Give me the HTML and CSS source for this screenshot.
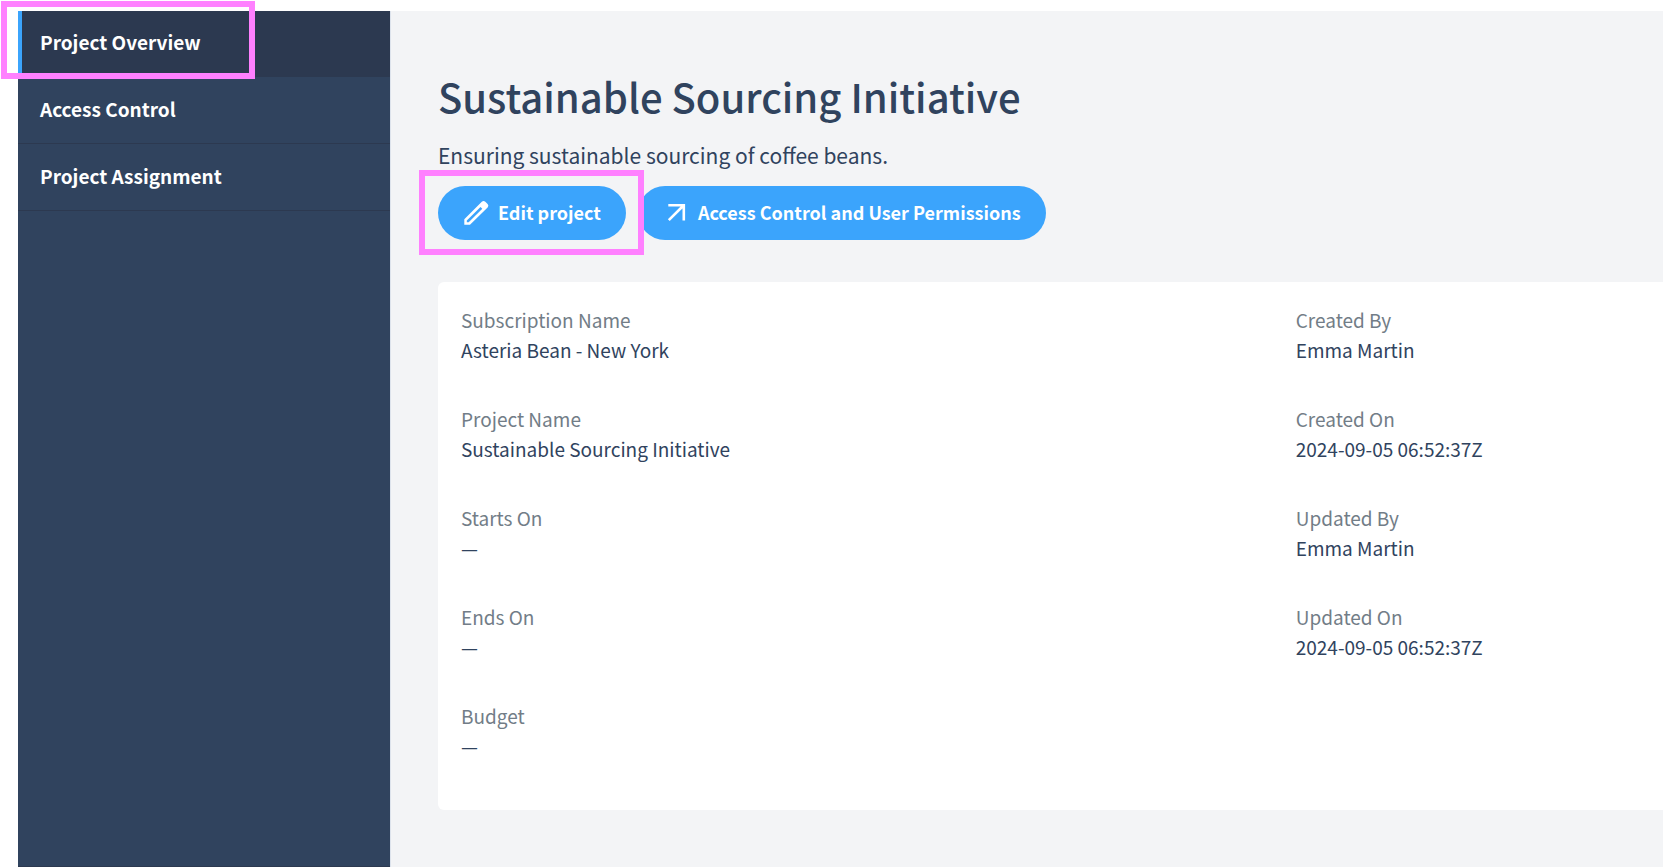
FILE: index.html
```html
<!DOCTYPE html>
<html lang="en">
<head>
<meta charset="utf-8">
<title>Sustainable Sourcing Initiative</title>
<link rel="stylesheet" href="styles.css">
</head>
<body>
<div class="layout">
  <nav class="sidebar" aria-label="Project">
    <div class="callout-anchor">
      <a class="nav-item nav-item-active" href="#overview" aria-current="page">Project Overview</a>
      <span class="callout callout-nav"></span>
    </div>
    <a class="nav-item" href="#access">Access Control</a>
    <a class="nav-item" href="#assignment">Project Assignment</a>
  </nav>
  <main class="content">
    <h1 class="title">Sustainable Sourcing Initiative</h1>
    <p class="description">Ensuring sustainable sourcing of coffee beans.</p>
    <div class="actions">
      <div class="callout-anchor callout-top">
        <button class="button" type="button">
          <svg class="icon" viewBox="0 -1 28 28" aria-hidden="true">
            <path fill="currentColor" fill-rule="evenodd" d="M2.300 25.700V20.300L19.800 2.800Q21.500 1.200 23.300 2.700L25.600 5Q27.200 6.700 25.600 8.400L8 25.700ZM4.800 23.300H6.700L20.300 9.700L18.500 7.900L4.800 21.500Z"/>
          </svg>
          Edit project
        </button>
        <span class="callout callout-button"></span>
      </div>
      <button class="button" type="button">
        <svg class="icon" viewBox="0 -1 28 28" aria-hidden="true">
          <path d="M6.800 21.200L21 7M6.300 6.200H21.800V21.400" fill="none" stroke="currentColor" stroke-width="2.600"/>
        </svg>
        Access Control and User Permissions
      </button>
    </div>
    <section class="card">
      <dl class="fields">
        <div><dt>Subscription Name</dt><dd>Asteria Bean - New York</dd></div>
        <div><dt>Project Name</dt><dd>Sustainable Sourcing Initiative</dd></div>
        <div><dt>Starts On</dt><dd>—</dd></div>
        <div><dt>Ends On</dt><dd>—</dd></div>
        <div><dt>Budget</dt><dd>—</dd></div>
      </dl>
      <dl class="fields">
        <div><dt>Created By</dt><dd>Emma Martin</dd></div>
        <div><dt>Created On</dt><dd>2024-09-05 06:52:37Z</dd></div>
        <div><dt>Updated By</dt><dd>Emma Martin</dd></div>
        <div><dt>Updated On</dt><dd>2024-09-05 06:52:37Z</dd></div>
      </dl>
    </section>
  </main>
</div>
</body>
</html>
```
FILE: styles.css
```css
* {
  box-sizing: border-box;
}

body {
  margin: 0;
  background: #fff;
  color: #30435e;
  font-family: "Source Sans Pro", "Noto Sans CJK SC", "Open Sans", sans-serif;
  font-size: 19px;
  line-height: 30px;
}

.layout {
  display: flex;
  min-height: 100vh;
  padding: 11px 0 0 18px;
}

.sidebar {
  flex: 0 0 372px;
  background: #30435e;
  border-bottom: 1px solid #2c3950;
}

.nav-item {
  display: block;
  padding: 17px 22px 19px;
  border-bottom: 1px solid #2c3950;
  color: #fff;
  font-weight: 700;
  text-decoration: none;
}

.nav-item-active {
  padding-top: 16px;
  padding-left: 18px;
  border-left: 4px solid #3ba4fc;
  background: #2c3950;
}

.content {
  flex: 1;
  min-width: 0;
  padding: 55px 0 56px 47px;
  border-left: 1px solid #dde3ec;
  background: #f3f4f6;
}

.title {
  margin: 0 0 14px;
  font-size: 40px;
  font-weight: 500;
  line-height: 60px;
}

.description {
  margin: 0 0 16px;
  font-size: 21px;
}

.actions {
  display: flex;
  gap: 12px;
  margin-bottom: 42px;
}

.button {
  display: flex;
  align-items: center;
  gap: 8px;
  padding: 11px 25px 13px 24px;
  border: 0;
  border-radius: 27px;
  background: #3ba4fc;
  color: #fff;
  font: inherit;
  font-size: 18px;
  font-weight: 700;
  white-space: nowrap;
}

.icon {
  width: 28px;
  height: 28px;
}

.card {
  display: grid;
  grid-template-columns: 25fr 11fr;
  padding: 23px 0 49px 23px;
  border-radius: 6px 0 0 6px;
  background: #fff;
}

.fields {
  display: flex;
  flex-direction: column;
  gap: 39px;
  margin: 0;
}

.fields dt {
  color: #727d87;
}

.fields dd {
  margin: 0;
}

/* Highlight frames drawn over the parts they point out */
.callout-anchor {
  position: relative;
}

.callout-top {
  z-index: 1;
}

.callout {
  position: absolute;
  border: 6px solid #ff80ff;
  pointer-events: none;
}

.callout-nav {
  inset: -10px 135px -2px -17px;
}

.callout-button {
  inset: -16px -18px -15px -19px;
}
```
